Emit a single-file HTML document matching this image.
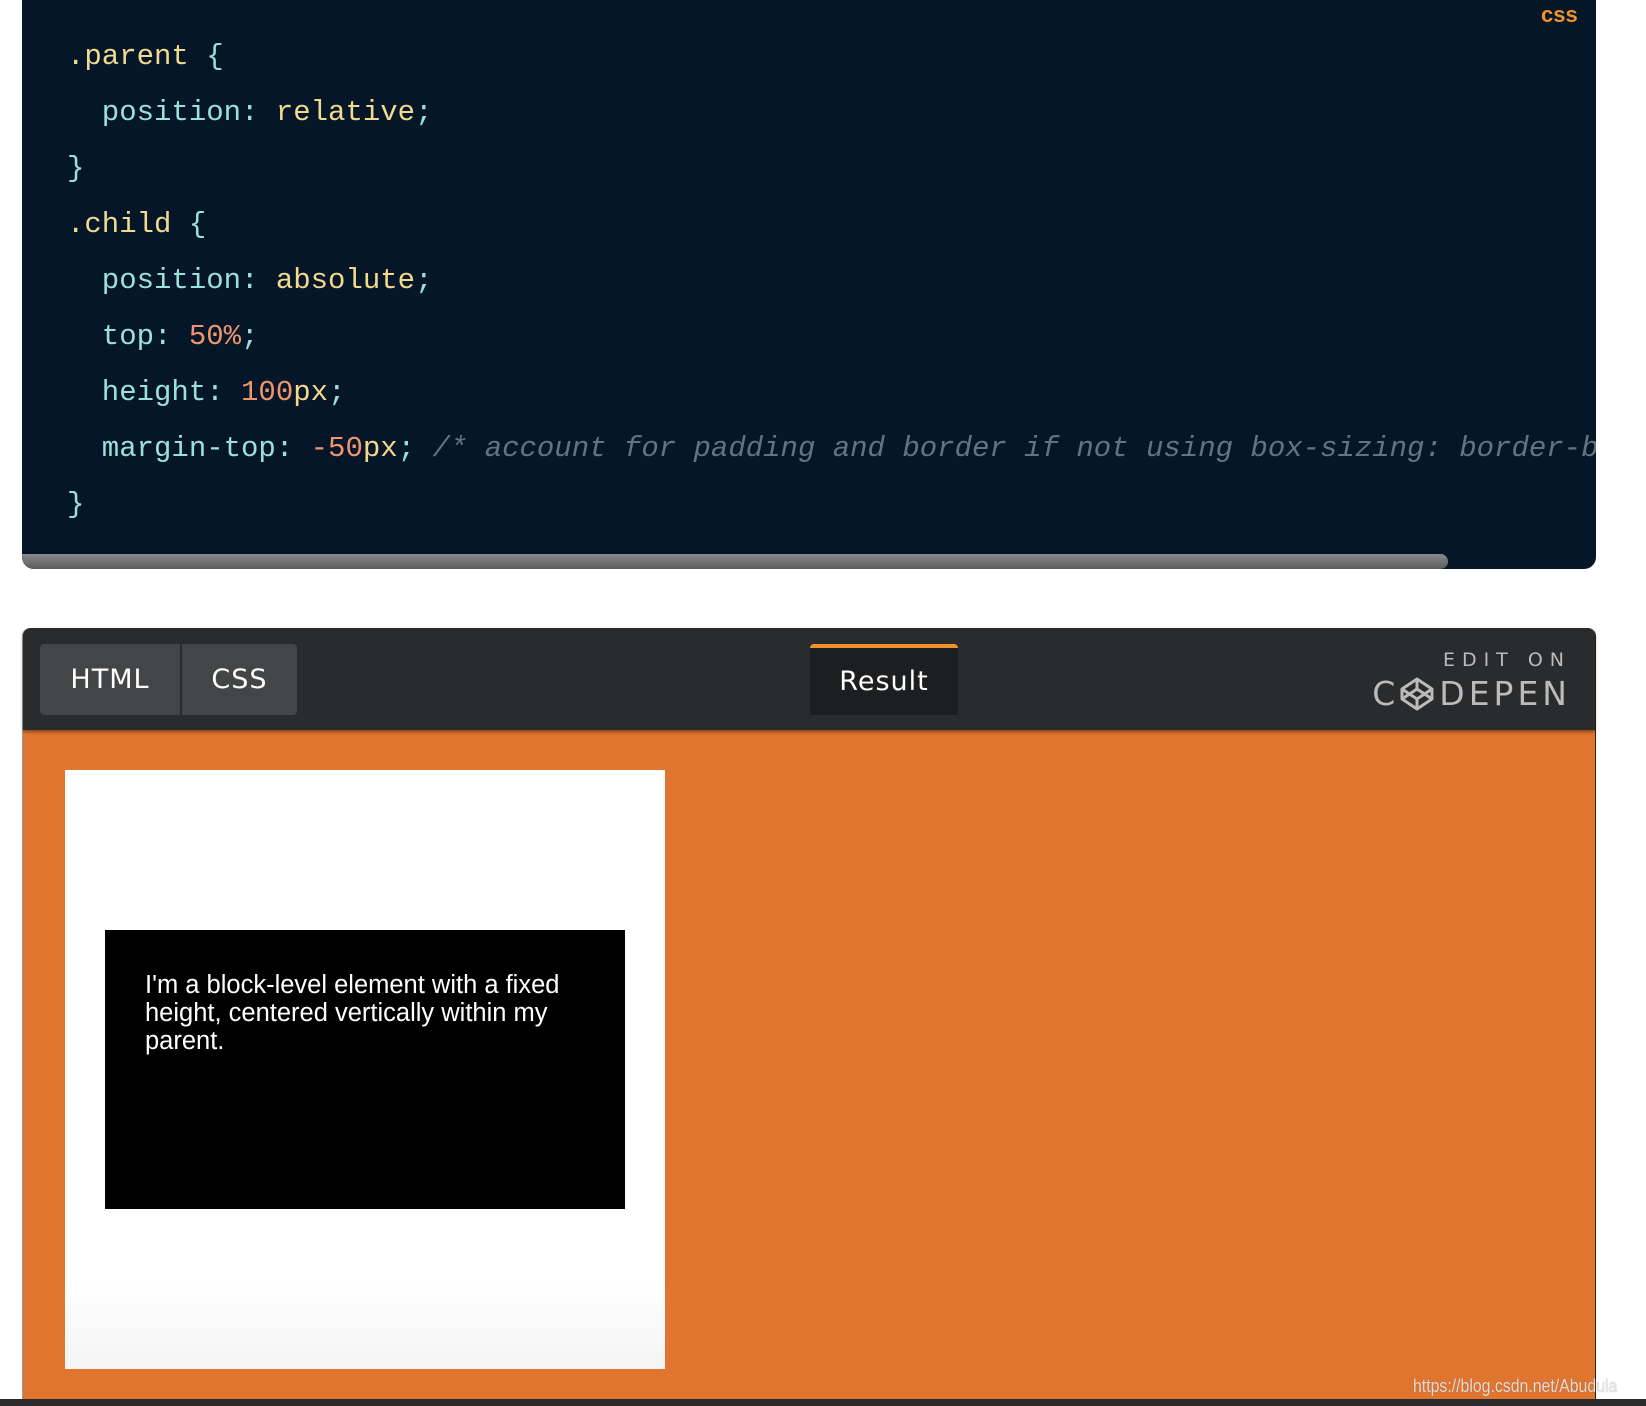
<!DOCTYPE html>
<html><head><meta charset="utf-8"><style>
*{margin:0;padding:0;box-sizing:border-box}
body{width:1646px;height:1406px;background:#fff;position:relative;overflow:hidden;font-family:"Liberation Sans",sans-serif}
#code{position:absolute;left:22px;top:-12px;width:1574px;height:581px;background:#061629;border-radius:12px;overflow:hidden}
#code pre{position:absolute;left:45px;top:0;font-family:"Liberation Mono",monospace;font-size:29px;line-height:56px;color:#9be0d9;white-space:pre;margin-top:41px}
.s{color:#f1d98d}.n{color:#f0966c}.c{color:#5f7680;font-style:italic}
#lbl{position:absolute;left:1541px;top:2px;color:#f0922b;font-weight:bold;font-size:22px}
#sb{position:absolute;left:0;bottom:0;width:1426px;height:15px;background:linear-gradient(#8a8a8a,#5b5b5b);border-radius:0 8px 8px 8px}
#pen{position:absolute;left:22px;top:628px;width:1574px;height:771px;background:#e07530;border-radius:8px 8px 0 0;border-right:1px solid #3a1a08;border-left:1px solid #999}
#hd{position:absolute;left:0;top:0;width:100%;height:102px;background:#2a2b2c;border-radius:8px 8px 0 0;box-shadow:0 2px 3px rgba(0,0,0,.4)}
.tab{position:absolute;top:16px;height:71px;background:#444546;color:#fff;font-size:27px;font-family:"DejaVu Sans",sans-serif;display:flex;align-items:center;justify-content:center;letter-spacing:1px}
#res{background:#1d1e1f;border-top:4px solid #f0922b;border-radius:4px 4px 0 0}
#edit{position:absolute;right:24px;top:21px;color:#bbb;font-size:19px;letter-spacing:7px;font-family:"DejaVu Sans",sans-serif}
#cp{position:absolute;right:24px;top:46px;color:#bbb;font-size:33px;letter-spacing:4px;font-family:"DejaVu Sans",sans-serif;display:flex;align-items:center}
#wb{position:absolute;left:42px;top:142px;width:600px;height:599px;background:linear-gradient(#fff 85%,#f4f4f4)}
#bb{position:absolute;left:40px;top:160px;width:520px;height:279px;background:#000;color:#fff;font-size:25.5px;line-height:28px;padding:41px 40px}
#wm{position:absolute;left:1413px;top:1376px;font-size:18px;color:rgba(235,235,235,.9);text-shadow:0 0 1px rgba(0,0,0,.35);transform:scaleX(.88);transform-origin:left}
#bot{position:absolute;left:0;top:1399px;width:100%;height:7px;background:#2a2a2a}
</style></head><body>
<div id="code">
<pre><span class="s">.parent</span> {
  position: <span class="s">relative</span>;
}
<span class="s">.child</span> {
  position: <span class="s">absolute</span>;
  top: <span class="n">50%</span>;
  height: <span class="n">100</span><span class="s">px</span>;
  margin-top: <span class="n">-50</span><span class="s">px</span>; <span class="c">/* account for padding and border if not using box-sizing: border-box */</span>
}</pre>
<div id="sb"></div></div>
<div id="lbl">css</div>
<div id="pen">
<div id="hd">
<div class="tab" style="left:17px;width:140px;border-radius:4px 0 0 4px">HTML</div>
<div class="tab" style="left:159px;width:115px;border-radius:0 4px 4px 0">CSS</div>
<div class="tab" id="res" style="left:787px;width:148px">Result</div>
<div id="edit">EDIT ON</div>
<div id="cp">C<svg width="36" height="36" viewBox="0 0 36 36" style="margin:0 4px 0 0"><g fill="none" stroke="#bbb" stroke-width="3" stroke-linejoin="round"><path d="M18 3L33 13V23L18 33L3 23V13Z"/><path d="M3 13L18 23L33 13M3 23L18 13L33 23M18 3V13M18 23V33"/></g></svg>DEPEN</div>
</div>
<div id="wb"><div id="bb">I'm a block-level element with a fixed height, centered vertically within my parent.</div></div>
</div>
<div id="wm">https://blog.csdn.net/Abudula</div>
<div id="bot"></div>
</body></html>
